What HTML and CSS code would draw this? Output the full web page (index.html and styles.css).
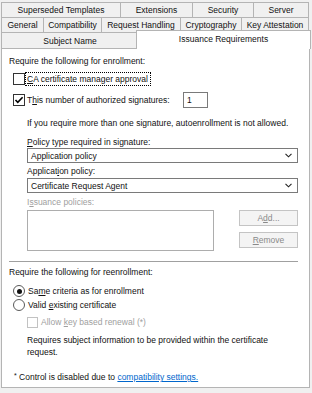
FILE: index.html
```html
<!DOCTYPE html>
<html>
<head>
<meta charset="utf-8">
<title>Issuance Requirements</title>
<link rel="stylesheet" href="styles.css">
</head>
<body>
<div class="dialog">
  <div class="tab-row">
    <div class="tab w120">Superseded Templates</div>
    <div class="tab w73">Extensions</div>
    <div class="tab w62">Security</div>
    <div class="tab w56">Server</div>
  </div>
  <div class="tab-row">
    <div class="tab w43">General</div>
    <div class="tab w59">Compatibility</div>
    <div class="tab w80">Request Handling</div>
    <div class="tab w62">Cryptography</div>
    <div class="tab w68">Key Attestation</div>
  </div>
  <div class="tab-row row3">
    <div class="tab w138">Subject Name</div>
    <div class="tab tab-active">Issuance Requirements</div>
  </div>
  <div class="panel">
    <div class="line first">Require the following for enrollment:</div>
    <div class="opt opt-ca">
      <span class="check"></span>
      <span class="focus"><u>C</u>A certificate manager approval</span>
    </div>
    <div class="opt opt-sig">
      <span class="check"><svg width="10" height="10" viewBox="0 0 10 10"><path d="M1.5 5 L3.8 7.4 L8.6 2.3" fill="none" stroke="#000" stroke-width="1.6"/></svg></span>
      <span class="sig-label">T<u>h</u>is number of authorized signatures:</span>
      <span class="numbox">1</span>
    </div>
    <div class="line note">If you require more than one signature, autoenrollment is not allowed.</div>
    <div class="indent">
      <div class="line gap7"><u>P</u>olicy type required in signature:</div>
      <div class="select"><span>Application policy</span><svg width="7" height="5" viewBox="0 0 7 5"><path d="M0.5 0.8 L3.5 3.8 L6.5 0.8" fill="none" stroke="#222" stroke-width="1.1"/></svg></div>
      <div class="line gap2">Applicat<u>i</u>on policy:</div>
      <div class="select gap1"><span>Certificate Request Agent</span><svg width="7" height="5" viewBox="0 0 7 5"><path d="M0.5 0.8 L3.5 3.8 L6.5 0.8" fill="none" stroke="#222" stroke-width="1.1"/></svg></div>
      <div class="line gap3 disabled">I<u>s</u>suance policies:</div>
      <div class="list-row">
        <div class="listbox"></div>
        <div class="buttons">
          <div class="btn">A<u>d</u>d...</div>
          <div class="btn"><u>R</u>emove</div>
        </div>
      </div>
    </div>
    <div class="separator"></div>
    <div class="line gap4">Require the following for reenrollment:</div>
    <div class="opt radio-row gap7r">
      <span class="radio on"></span>
      <span>Sa<u>m</u>e criteria as for enrollment</span>
    </div>
    <div class="opt radio-row gap2r">
      <span class="radio"></span>
      <span>Valid <u>e</u>xisting certificate</span>
    </div>
    <div class="opt opt-disabled">
      <span class="check check-off"></span>
      <span class="disabled">Allow <u>k</u>ey based renewal (*)</span>
    </div>
    <div class="line indent-text">Requires subject information to be provided within the certificate<br>request.</div>
    <div class="line footnote"><span class="star">*</span> Control is disabled due to <a class="link" href="#">compatibility settings.</a></div>
  </div>
</div>
</body>
</html>
```

FILE: styles.css
```css
* { box-sizing: border-box; }
html, body { margin: 0; padding: 0; }
body {
  background: #f0f0f0;
  font-family: "Liberation Sans", Arial, sans-serif;
  font-size: 8.5px;
  color: #111;
  width: 312px;
  height: 393px;
  overflow: hidden;
}
u { text-decoration: underline; text-underline-offset: 1px; }

.dialog { padding: 2px 0 0 1px; width: 312px; }

.tab-row { display: flex; height: 16px; }
.tab-row + .tab-row { margin-top: -1px; }
.row3 { height: 17px; }

.tab {
  border: 1px solid #b4b4b4;
  background: #f0f0f0;
  display: flex;
  align-items: center;
  justify-content: center;
  white-space: nowrap;
  flex: none;
}
.tab + .tab { margin-left: -1px; }
.w120 { width: 120px; }
.w73 { width: 73px; }
.w62 { width: 62px; }
.w56 { width: 56px; }
.w43 { width: 43px; }
.w59 { width: 59px; }
.w80 { width: 80px; }
.w68 { width: 68px; }
.w138 { width: 138px; }

.tab.tab-active {
  position: relative;
  z-index: 1;
  width: 175px;
  height: 19px;
  margin-left: -3px;
  margin-top: -2px;
  background: #fff;
  border-bottom: none;
  align-items: flex-start;
  padding-top: 3px;
}

.panel {
  position: relative;
  width: 309px;
  height: 340px;
  margin-top: -1px;
  background: #fff;
  border: 1px solid #b4b4b4;
  padding: 0 11px 0 7px;
}

.line { line-height: 12px; white-space: nowrap; }
.first { margin-top: 6px; }
.gap7 { margin-top: 7px; }
.gap2 { margin-top: 2px; }
.gap1 { margin-top: 1px; }
.gap3 { margin-top: 3px; }
.gap4 { margin-top: 4px; }

.opt { display: flex; align-items: center; padding-left: 4px; white-space: nowrap; }
.opt-ca { height: 14px; margin-top: 5px; }
.opt-sig { height: 16px; margin-top: 6px; }

.check {
  width: 12px;
  height: 12px;
  border: 1px solid #333;
  background: #fff;
  flex: none;
  display: flex;
  align-items: center;
  justify-content: center;
}
.opt-sig .check { margin-right: 2px; }
.opt-disabled .check { margin-right: 3px; width: 11px; height: 11px; }
.check-off { border-color: #c2c2c2; }

.focus {
  border: 1px dotted #000;
  padding: 0 2px 0 1px;
  line-height: 12px;
}

.sig-label { width: 156px; }
.numbox {
  width: 25px;
  height: 16px;
  border: 1px solid #7a7a7a;
  padding-left: 3px;
  line-height: 14px;
}

.note { margin-top: 9px; padding-left: 18px; }

.indent { padding-left: 18px; }

.select {
  height: 15px;
  border: 1px solid #7a7a7a;
  background: #fff;
  display: flex;
  align-items: center;
  justify-content: space-between;
  padding: 0 5px 0 3px;
}

.disabled { color: #a0a0a0; }

.list-row {
  display: flex;
  justify-content: space-between;
  margin-top: 2px;
}
.listbox {
  width: 187px;
  height: 41px;
  border: 1px solid #adadad;
  background: #fff;
}
.buttons { display: flex; flex-direction: column; gap: 6px; }
.btn {
  width: 59px;
  height: 16px;
  border: 1px solid #c4c4c4;
  background: #f4f4f4;
  color: #8a8a8a;
  display: flex;
  align-items: center;
  justify-content: center;
}

.separator { height: 1px; background: #a0a0a0; margin-top: 10px; }

.radio-row { height: 12px; }
.gap7r { margin-top: 7px; }
.gap2r { margin-top: 2px; }
.radio {
  width: 12px;
  height: 12px;
  border: 1px solid #5a5a5a;
  border-radius: 50%;
  background: #fff;
  margin-right: 3px;
  flex: none;
  display: flex;
  align-items: center;
  justify-content: center;
}
.radio.on::after {
  content: "";
  width: 5px;
  height: 5px;
  border-radius: 50%;
  background: #111;
}

.opt-disabled { height: 12px; margin-top: 5px; padding-left: 18px; }

.indent-text { margin-top: 6px; padding-left: 18px; }

.footnote { margin-top: 12px; padding-left: 5px; }
.star { font-size: 7px; vertical-align: 2px; }
.link { color: #0066cc; text-decoration: underline; }
```
